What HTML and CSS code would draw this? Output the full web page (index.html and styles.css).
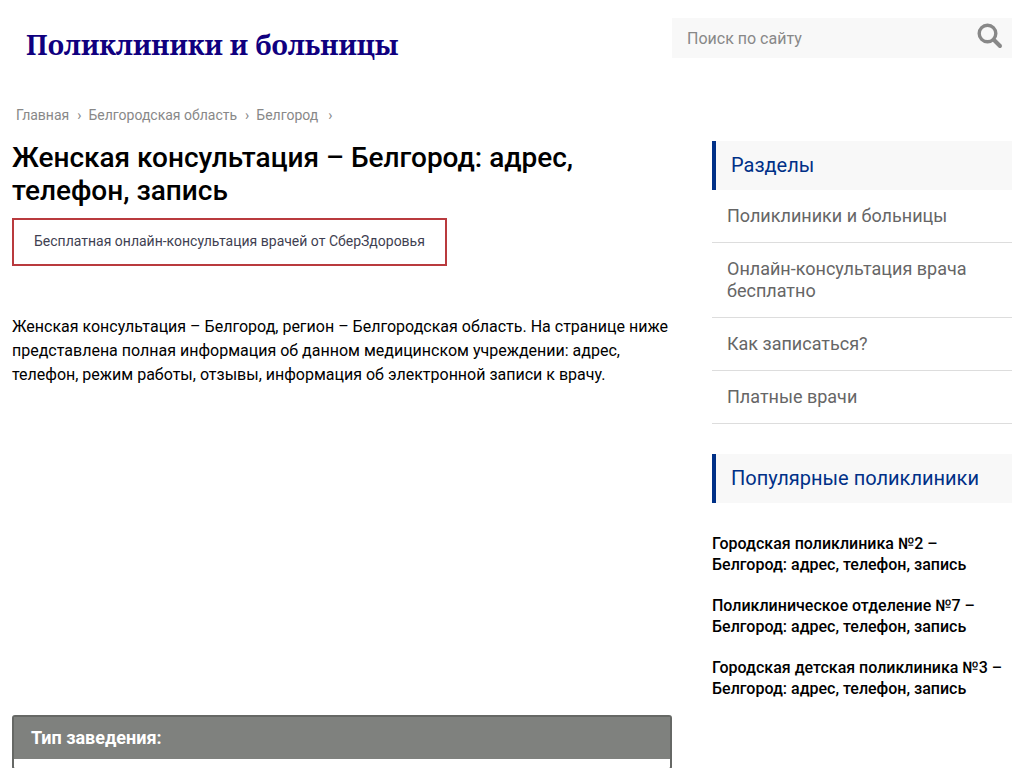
FILE: index.html
```html
<!DOCTYPE html>
<html lang="ru">
<head>
<meta charset="utf-8">
<meta name="viewport" content="width=device-width, initial-scale=1">
<title>Женская консультация – Белгород</title>
<link rel="stylesheet" href="styles.css">
</head>
<body>
<div class="page">
  <header class="header">
    <a class="logo" href="#">Поликлиники и больницы</a>
    <form class="search" role="search">
      <input class="search-input" type="text" placeholder="Поиск по сайту" aria-label="Поиск по сайту">
      <button class="search-button" type="button" aria-label="Найти">
        <svg class="search-icon" viewBox="0 0 26 26" aria-hidden="true"><circle cx="10.5" cy="10.5" r="8.3" fill="none" stroke="#888" stroke-width="3.4"/><path d="M17 17l6 6" fill="none" stroke="#888" stroke-width="4" stroke-linecap="round"/></svg>
      </button>
    </form>
  </header>
  <nav class="breadcrumbs" aria-label="Навигация">
    <a href="#">Главная</a><span class="sep">›</span><a href="#">Белгородская область</a><span class="sep">›</span><a href="#">Белгород</a><span class="sep last">›</span>
  </nav>
  <div class="columns">
    <main class="content">
      <h1 class="title">Женская консультация – Белгород: адрес, телефон, запись</h1>
      <a class="consult" href="#">Бесплатная онлайн-консультация врачей от СберЗдоровья</a>
      <p class="intro">Женская консультация – Белгород, регион – Белгородская область. На странице ниже представлена полная информация об данном медицинском учреждении: адрес, телефон, режим работы, отзывы, информация об электронной записи к врачу.</p>
      <section class="card">
        <h2 class="card-title">Тип заведения:</h2>
        <div class="card-body"></div>
      </section>
    </main>
    <aside class="sidebar">
      <h2 class="side-title">Разделы</h2>
      <ul class="menu">
        <li><a href="#">Поликлиники и больницы</a></li>
        <li><a href="#">Онлайн-консультация врача бесплатно</a></li>
        <li><a href="#">Как записаться?</a></li>
        <li><a href="#">Платные врачи</a></li>
      </ul>
      <h2 class="side-title">Популярные поликлиники</h2>
      <ul class="popular">
        <li><a href="#">Городская поликлиника №2 – Белгород: адрес, телефон, запись</a></li>
        <li><a href="#">Поликлиническое отделение №7 – Белгород: адрес, телефон, запись</a></li>
        <li><a href="#">Городская детская поликлиника №3 – Белгород: адрес, телефон, запись</a></li>
      </ul>
    </aside>
  </div>
</div>
</body>
</html>
```
FILE: styles.css
```css
* { box-sizing: border-box; }
html { scrollbar-width: none; }
body { margin: 0; font-family: Roboto, "Liberation Sans", sans-serif; font-size: 16px; line-height: 24px; color: #000; background: #fff; }
a { color: inherit; text-decoration: none; }
h1, h2, p, ul { margin: 0; padding: 0; }
ul { list-style: none; }
.page { max-width: 1200px; margin: 0 auto; padding: 18px 12px 0; }
.header { display: flex; justify-content: space-between; align-items: flex-start; padding-bottom: 32px; }
.logo { padding: 9px 14px; font-family: "Noto Serif", "DejaVu Serif", "Liberation Serif", serif; font-size: 27px; line-height: 36px; font-weight: bold; color: #10007f; }
.search { display: flex; width: 340px; height: 40px; background: #f8f8f8; }
.search-input { flex: 1; min-width: 0; padding: 2px 15px 0; border: 0; background: none; font: inherit; color: #333; }
.search-input::placeholder { color: #888; opacity: 1; }
.search-button { padding: 5px 9px 9px; border: 0; background: none; }
.search-icon { display: block; width: 26px; height: 26px; }
.breadcrumbs { display: flex; padding: 0 4px; font-size: 14px; line-height: 22px; color: #888; }
.sep { padding: 0 7px 0 8px; }
.last { padding-left: 10px; }
.columns { display: flex; gap: 40px; padding-top: 15px; }
.content { flex: 1; min-width: 0; }
.title { font-size: 28px; line-height: 33px; font-weight: 500; }
.consult { display: inline-block; margin-top: 11px; padding: 10px 20px 12px; border: 2px solid #b93a3e; font-size: 14px; line-height: 22px; color: #3f3f52; }
.intro { margin-top: 49px; }
.card { margin-top: 328px; border: 2px solid #666865; border-radius: 3px; }
.card-title { padding: 9px 17px; background: #7f817e; color: #fff; font-size: 18px; line-height: 24px; font-weight: bold; }
.card-body { min-height: 9px; }
.sidebar { width: 300px; }
.side-title { padding: 12px 15px; border-left: 4px solid #003087; background: #f8f8f8; color: #003087; font-size: 20px; line-height: 25px; font-weight: 400; }
.menu { margin-bottom: 30px; font-size: 18px; line-height: 22px; color: #666; }
.menu li { padding: 15px; border-bottom: 1px solid #ddd; }
.popular { display: grid; gap: 20px; margin-top: 30px; font-weight: 500; line-height: 21px; }
```
